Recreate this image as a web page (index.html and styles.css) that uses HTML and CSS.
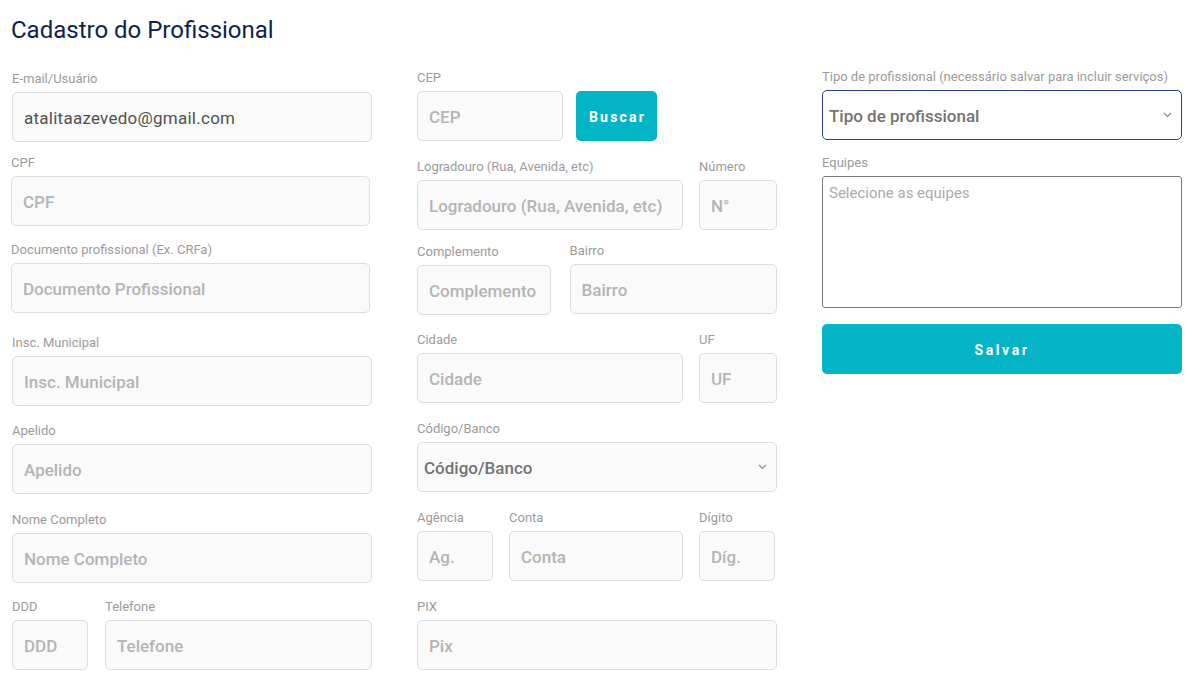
FILE: index.html
```html
<!DOCTYPE html>
<html lang="pt-BR">
<head>
<meta charset="utf-8">
<title>Cadastro do Profissional</title>
<link rel="stylesheet" href="styles.css">
</head>
<body>
<div class="page">
  <h1 class="title">Cadastro do Profissional</h1>
  <div class="cols">
    <div class="col col1">
      <div class="field g1">
        <label class="lbl">E-mail/Usuário</label>
        <input class="inp val" value="atalitaazevedo@gmail.com">
      </div>
      <div class="field g2 shift">
        <label class="lbl">CPF</label>
        <input class="inp" placeholder="CPF">
      </div>
      <div class="field g3 shift">
        <label class="lbl">Documento profissional (Ex. CRFa)</label>
        <input class="inp" placeholder="Documento Profissional">
      </div>
      <div class="field g4">
        <label class="lbl">Insc. Municipal</label>
        <input class="inp" placeholder="Insc. Municipal">
      </div>
      <div class="field g5">
        <label class="lbl">Apelido</label>
        <input class="inp" placeholder="Apelido">
      </div>
      <div class="field g6">
        <label class="lbl">Nome Completo</label>
        <input class="inp" placeholder="Nome Completo">
      </div>
      <div class="row g7 gap17">
        <div class="field w76">
          <label class="lbl">DDD</label>
          <input class="inp" placeholder="DDD">
        </div>
        <div class="field grow">
          <label class="lbl">Telefone</label>
          <input class="inp" placeholder="Telefone">
        </div>
      </div>
    </div>

    <div class="col col2">
      <div class="row c1 gap13">
        <div class="field w146">
          <label class="lbl">CEP</label>
          <input class="inp" placeholder="CEP">
        </div>
        <button class="btn buscar">Buscar</button>
      </div>
      <div class="row c2 gap16">
        <div class="field w266">
          <label class="lbl">Logradouro (Rua, Avenida, etc)</label>
          <input class="inp" placeholder="Logradouro (Rua, Avenida, etc)">
        </div>
        <div class="field w78">
          <label class="lbl">Número</label>
          <input class="inp" placeholder="N°">
        </div>
      </div>
      <div class="row c3 gap19">
        <div class="field w134 down1">
          <label class="lbl">Complemento</label>
          <input class="inp" placeholder="Complemento">
        </div>
        <div class="field w208">
          <label class="lbl">Bairro</label>
          <input class="inp" placeholder="Bairro">
        </div>
      </div>
      <div class="row c4 gap16">
        <div class="field w266">
          <label class="lbl">Cidade</label>
          <input class="inp" placeholder="Cidade">
        </div>
        <div class="field w78">
          <label class="lbl">UF</label>
          <input class="inp" placeholder="UF">
        </div>
      </div>
      <div class="field c5">
        <label class="lbl">Código/Banco</label>
        <div class="sel">
          <span>Código/Banco</span>
          <svg class="chev" width="9" height="6" viewBox="0 0 9 6"><path d="M1 1l3.5 3.5L8 1" fill="none" stroke="#8a8a8a" stroke-width="1.1"/></svg>
        </div>
      </div>
      <div class="row c6 gap16">
        <div class="field w76">
          <label class="lbl">Agência</label>
          <input class="inp" placeholder="Ag.">
        </div>
        <div class="field w174">
          <label class="lbl">Conta</label>
          <input class="inp" placeholder="Conta">
        </div>
        <div class="field w76">
          <label class="lbl">Dígito</label>
          <input class="inp" placeholder="Díg.">
        </div>
      </div>
      <div class="field c7">
        <label class="lbl">PIX</label>
        <input class="inp" placeholder="Pix">
      </div>
    </div>

    <div class="col col3">
      <div class="field">
        <label class="lbl">Tipo de profissional (necessário salvar para incluir serviços)</label>
        <div class="sel sel-focus">
          <span>Tipo de profissional</span>
          <svg class="chev" width="9" height="6" viewBox="0 0 9 6"><path d="M1 1l3.5 3.5L8 1" fill="none" stroke="#8a8a8a" stroke-width="1.1"/></svg>
        </div>
      </div>
      <div class="field e2">
        <label class="lbl">Equipes</label>
        <textarea class="area" placeholder="Selecione as equipes"></textarea>
      </div>
      <button class="btn salvar">Salvar</button>
    </div>
  </div>
</div>
</body>
</html>
```

FILE: styles.css
```css
* { box-sizing: border-box; }
html, body { margin: 0; padding: 0; background: #ffffff; }
body { font-family: Roboto, "Liberation Sans", sans-serif; }

.page { padding: 15px 0 0 11px; }

.title {
  margin: 0;
  font-size: 24px;
  line-height: 30px;
  font-weight: 400;
  color: #0e1f4d;
  letter-spacing: 0;
}

.cols {
  display: grid;
  grid-template-columns: 361px 360px 360px;
  column-gap: 45px;
  margin-top: 23px;
  align-items: start;
}

.col { display: flex; flex-direction: column; }
.col1 { padding-left: 1px; }
.col2 { padding-left: 0; }
.col3 { padding-left: 0; }

.field { display: flex; flex-direction: column; }
.row { display: flex; align-items: flex-end; }

.lbl {
  font-size: 13px;
  line-height: 16px;
  padding-top: 1px;
  color: #9b9b9b;
  margin-bottom: 5px;
  white-space: nowrap;
}

.inp {
  height: 50px;
  width: 100%;
  border: 1px solid #dedede;
  border-radius: 5px;
  background: #fafafa;
  padding: 2px 11px 0;
  font-family: Roboto, "Liberation Sans", sans-serif;
  font-size: 17px;
  font-weight: 500;
  color: #555555;
  outline: none;
}
.inp::placeholder { color: #b4b4b4; opacity: 1; }
.inp.val { font-weight: 400; color: #505050; letter-spacing: 0.25px; }

/* column 1 spacing */
.g1 { margin-top: 2px; }
.g2 { margin-top: 12px; }
.g3 { margin-top: 15px; }
.g4 { margin-top: 21px; }
.g5 { margin-top: 16px; }
.g6 { margin-top: 17px; }
.g7 { margin-top: 15px; }
.shift { margin-left: -1px; width: 359px; }

/* column 2 spacing */
.c1 { margin-top: 1px; }
.c2 { margin-top: 17px; }
.c3 { margin-top: 12px; }
.c4 { margin-top: 17px; }
.c5 { margin-top: 17px; }
.c6 { margin-top: 17px; }
.c7 { margin-top: 17px; }
.down1 { position: relative; top: 1px; }

.gap13 { gap: 13px; }
.gap16 { gap: 16px; }
.gap17 { gap: 17px; }
.gap19 { gap: 19px; }

.w76 { width: 76px; }
.w78 { width: 78px; }
.w134 { width: 134px; }
.w146 { width: 146px; }
.w174 { width: 174px; }
.w208 { width: 208px; }
.w266 { width: 266px; }
.grow { flex: 1; }

.btn {
  border: none;
  border-radius: 5px;
  background: #03b4c6;
  color: #ffffff;
  font-family: Roboto, "Liberation Sans", sans-serif;
  font-weight: 700;
  font-size: 14px;
  letter-spacing: 2.2px;
  height: 50px;
  padding-top: 2px;
  cursor: pointer;
}
.buscar { width: 81px; padding-left: 2px; padding-right: 0; }
.salvar { width: 360px; margin-top: 16px; letter-spacing: 2.6px; }

.sel {
  position: relative;
  height: 50px;
  border: 1px solid #dedede;
  border-radius: 5px;
  background: #fafafa;
  display: flex;
  align-items: center;
  justify-content: space-between;
  padding: 2px 9px 0 6px;
  font-size: 17px;
  font-weight: 500;
  color: #737373;
}
.sel-focus { border-color: #2f3f8f; background: #ffffff; }
.chev { display: block; margin-top: -2px; }

.e2 { margin-top: 14px; }
.area {
  height: 132px;
  width: 360px;
  border: 1px solid #7a7a7a;
  border-radius: 3px;
  background: #ffffff;
  resize: none;
  padding: 6px 6px;
  font-family: Roboto, "Liberation Sans", sans-serif;
  font-size: 15px;
  line-height: 20px;
  color: #555555;
  outline: none;
}
.area::placeholder { color: #ababab; opacity: 1; }
```
